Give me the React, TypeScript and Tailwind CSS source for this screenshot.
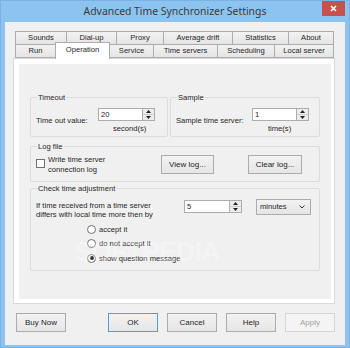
import React from "react";

const topTabs = [
  { label: "Sounds", w: "w-[52px]" },
  { label: "Dial-up", w: "w-[51px]" },
  { label: "Proxy", w: "w-[48px]" },
  { label: "Average drift", w: "w-[70px]" },
  { label: "Statistics", w: "w-[57px]" },
  { label: "About", w: "w-[46px]" },
];

const bottomTabs = [
  { label: "Run", w: "w-[41px]" },
  { label: "Operation", w: "w-[55px]", active: true },
  { label: "Service", w: "w-[45px]" },
  { label: "Time servers", w: "w-[65px]" },
  { label: "Scheduling", w: "w-[58px]" },
  { label: "Local server", w: "w-[60px]" },
];

function Tab({ label, w, active }: { label: string; w: string; active?: boolean }) {
  if (active) {
    return (
      <div
        className={`${w} relative z-10 -ml-px -mb-px h-[17px] border border-b-0 border-[#acacac] bg-white flex items-center justify-center pb-[2px]`}
      >
        {label}
      </div>
    );
  }
  return (
    <div
      className={`${w} -ml-px first:ml-0 h-[14px] border border-[#acacac] bg-gradient-to-b from-[#f2f2f2] to-[#e5e5e5] flex items-center justify-center`}
    >
      {label}
    </div>
  );
}

function Spin({ value, w }: { value: string; w: string }) {
  return (
    <div className="flex h-[13px]">
      <div className={`${w} h-full bg-white border border-[#abadb3] pl-[2px] leading-[11px]`}>{value}</div>
      <div className="w-[12px] h-full border border-l-0 border-[#acacac] bg-[#ececec] flex flex-col">
        <div className="flex-1 flex items-center justify-center border-b border-[#cfcfcf]">
          <svg width="5" height="3" viewBox="0 0 5 3">
            <path d="M2.5 0L5 3H0z" fill="#222" />
          </svg>
        </div>
        <div className="flex-1 flex items-center justify-center">
          <svg width="5" height="3" viewBox="0 0 5 3">
            <path d="M0 0H5L2.5 3z" fill="#222" />
          </svg>
        </div>
      </div>
    </div>
  );
}

function Button({ children, w, primary, disabled }: { children: React.ReactNode; w: string; primary?: boolean; disabled?: boolean }) {
  const tone = disabled
    ? "border-[#d5d5d5] bg-[#f4f4f4] text-[#a3a3a3]"
    : primary
      ? "border-[#5b9bd5] bg-gradient-to-b from-[#f2f2f2] to-[#e6e6e6]"
      : "border-[#acacac] bg-gradient-to-b from-[#f2f2f2] to-[#e6e6e6]";
  return (
    <div className={`${w} h-[19px] border ${tone} flex items-center justify-center text-[8px]`}>{children}</div>
  );
}

function Radio({ label, checked }: { label: string; checked?: boolean }) {
  return (
    <div className="h-[14.5px] flex items-center">
      <div className="w-[9px] h-[9px] rounded-full border border-[#707070] bg-white flex items-center justify-center">
        {checked && <div className="w-[4px] h-[4px] rounded-full bg-[#333]" />}
      </div>
      <span className="ml-[3px]">{label}</span>
    </div>
  );
}

function GroupLabel({ children }: { children: React.ReactNode }) {
  return <div className="-mt-[5px] ml-[6px] px-px w-fit bg-[#f0f0f0] leading-[9px]">{children}</div>;
}

export default function App() {
  return (
    <div className="w-[350px] h-[348px] bg-[#8dc3ef] border border-[#79b2e4] relative overflow-hidden font-['Liberation_Sans',Arial,sans-serif] text-[7.6px] text-[#262626]">
      {/* title bar */}
      <div className="h-[21px] flex items-center justify-center">
        <span className="font-['Noto_Sans',sans-serif] text-[10.4px] text-[#3a3a3a] mt-[1px]">
          Advanced Time Synchronizer Settings
        </span>
      </div>
      <div className="absolute right-[4px] top-0 w-[23px] h-[15px] bg-[#c75050] flex items-center justify-center">
        <svg width="7" height="7" viewBox="0 0 7 7">
          <path d="M1 1L6 6M6 1L1 6" stroke="#fff" strokeWidth="1.6" />
        </svg>
      </div>

      {/* client */}
      <div className="mx-[4px] h-[323px] bg-[#f0f0f0] pt-[9px] pl-[8px]">
        <div className="ml-[2px] flex">
          {topTabs.map((t) => (
            <Tab key={t.label} label={t.label} w={t.w} />
          ))}
        </div>
        <div className="ml-[2px] h-[14px] -mt-px flex items-end">
          {bottomTabs.map((t) => (
            <Tab key={t.label} label={t.label} w={t.w} active={t.active} />
          ))}
        </div>

        {/* page */}
        <div className="w-[322px] h-[246px] border border-[#d9d9d9] bg-white pl-[5px] pt-[5px]">
          <div className="relative w-[312px] h-[235px] bg-[#f0f0f0] pt-[33px] px-[11px]">
            <div className="flex gap-[2px]">
              <div className="w-[138px] h-[40px] border border-[#dcdcdc] rounded-[2px]">
                <GroupLabel>Timeout</GroupLabel>
                <div className="flex items-start mt-[6px] pl-[5px]">
                  <div className="w-[62px] pt-[8px] leading-[9px]">Time out value:</div>
                  <Spin value="20" w="w-[45px]" />
                </div>
                <div className="ml-[82px] leading-[9px] -mt-[1px]">second(s)</div>
              </div>
              <div className="w-[150px] h-[40px] border border-[#dcdcdc] rounded-[2px]">
                <GroupLabel>Sample</GroupLabel>
                <div className="flex items-start mt-[6px] pl-[5px]">
                  <div className="w-[76px] pt-[8px] leading-[9px]">Sample time server:</div>
                  <Spin value="1" w="w-[45px]" />
                </div>
                <div className="ml-[97px] leading-[9px] -mt-[1px]">time(s)</div>
              </div>
            </div>

            <div className="mt-[9px] w-[290px] h-[36px] border border-[#dcdcdc] rounded-[2px]">
              <GroupLabel>Log file</GroupLabel>
              <div className="flex items-start mt-[4px] pl-[5px]">
                <div className="w-[125px] flex items-start">
                  <div className="w-[9px] h-[9px] mt-[4px] border border-[#707070] bg-white" />
                  <div className="ml-[3px] leading-[10px]">
                    Write time server
                    <br />
                    connection log
                  </div>
                </div>
                <Button w="w-[53px]">View log...</Button>
                <div className="ml-[34px]">
                  <Button w="w-[54px]">Clear log...</Button>
                </div>
              </div>
            </div>

            <div className="mt-[6px] w-[290px] h-[83px] border border-[#dcdcdc] rounded-[2px]">
              <GroupLabel>Check time adjustment</GroupLabel>
              <div className="flex items-start mt-[6px] pl-[5px]">
                <div className="w-[148px] pt-[2px] leading-[9px]">
                  If time received from a time server
                  <br />
                  differs with local time more then by
                </div>
                <div className="mt-[1px]">
                  <Spin value="5" w="w-[46px]" />
                </div>
                <div className="ml-[14px] w-[55px] h-[16px] border border-[#acacac] bg-gradient-to-b from-[#f2f2f2] to-[#e5e5e5] flex items-center justify-between pl-[3px] pr-[5px]">
                  <span>minutes</span>
                  <svg width="6" height="4" viewBox="0 0 6 4">
                    <path d="M0.5 0.5L3 3L5.5 0.5" stroke="#333" strokeWidth="1" fill="none" />
                  </svg>
                </div>
              </div>
              <div className="mt-[3px] ml-[56px]">
                <Radio label="accept it" />
                <Radio label="do not accept it" />
                <Radio label="show question message" checked />
              </div>
            </div>

            {/* faint watermark over the page */}
            <div
              aria-hidden="true"
              className="absolute left-[55px] top-[175px] font-['Liberation_Sans',sans-serif] font-bold text-[27px] leading-none tracking-[-1px] text-white/30 pointer-events-none select-none"
            >
              SOFTPEDIA<span className="text-[7px] align-top">®</span>
            </div>
          </div>
        </div>

        {/* dialog buttons */}
        <div className="mt-[9px] ml-[3px] flex">
          <Button w="w-[50px]">Buy Now</Button>
          <div className="ml-[42px] flex gap-[9px]">
            <Button w="w-[50px]" primary>
              OK
            </Button>
            <Button w="w-[50px]">Cancel</Button>
            <Button w="w-[50px]">Help</Button>
            <Button w="w-[50px]" disabled>
              Apply
            </Button>
          </div>
        </div>
      </div>
    </div>
  );
}
